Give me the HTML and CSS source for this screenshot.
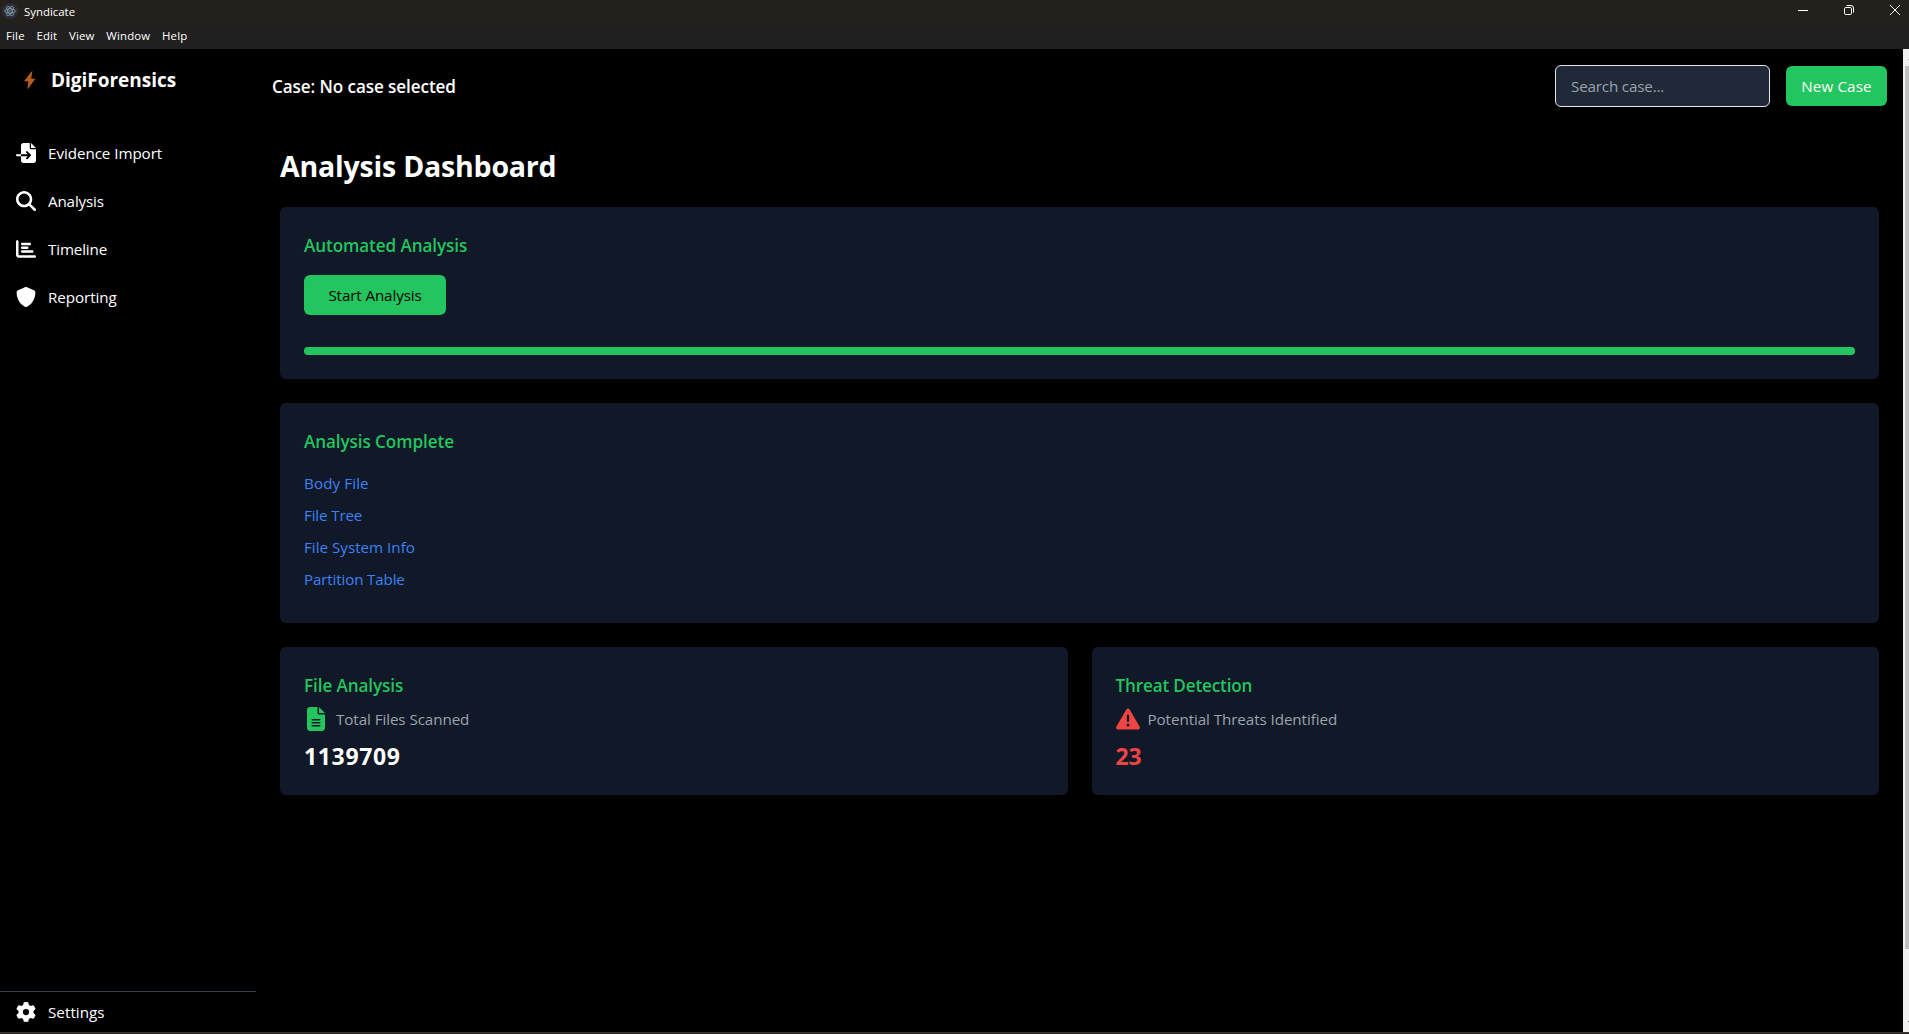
FILE: index.html
```html
<!DOCTYPE html>
<html lang="en">
<head>
<meta charset="utf-8">
<title>Syndicate</title>
<link rel="stylesheet" href="styles.css">
</head>
<body>
<div class="window">
  <header class="titlebar">
    <svg class="app-icon" viewBox="0 0 16 16"><circle cx="8" cy="8" r="8" fill="#2b2e3a"/><g fill="none" stroke="#8fb0b6" stroke-width=".7"><ellipse cx="8" cy="8" rx="5.3" ry="2.1"/><ellipse cx="8" cy="8" rx="5.3" ry="2.1" transform="rotate(60 8 8)"/><ellipse cx="8" cy="8" rx="5.3" ry="2.1" transform="rotate(120 8 8)"/></g><circle cx="8" cy="8" r=".7" fill="#8fb0b6"/></svg>
    <span class="app-name">Syndicate</span>
    <div class="controls">
      <svg viewBox="0 0 12 12"><path d="M1 6.5h10"/></svg>
      <svg viewBox="0 0 12 12"><rect x="1.5" y="3.5" width="7" height="7" rx="1.3"/><path d="M3.5 1.5H8A2.5 2.5 0 0 1 10.5 4v4.5"/></svg>
      <svg viewBox="0 0 12 12"><path d="M1 1l10 10M11 1L1 11"/></svg>
    </div>
  </header>
  <nav class="menubar"><span>File</span><span>Edit</span><span>View</span><span>Window</span><span>Help</span></nav>
  <div class="app">
    <aside class="sidebar">
      <div class="brand">
        <svg viewBox="0 0 12 20"><path d="M8.4.5 0 11.2h4.3L3.4 19.6 11.4 8.8H7.3z"/></svg>
        <span>DigiForensics</span>
      </div>
      <nav class="nav">
        <a class="nav-item"><svg viewBox="0 0 512 512"><path d="M128 64c0-35.3 28.7-64 64-64H352V128c0 17.7 14.3 32 32 32H512V448c0 35.3-28.7 64-64 64H192c-35.3 0-64-28.7-64-64V336H302.1l-39 39c-9.4 9.4-9.4 24.6 0 33.9s24.6 9.4 33.9 0l80-80c9.4-9.4 9.4-24.6 0-33.9l-80-80c-9.4-9.4-24.6-9.4-33.9 0s-9.4 24.6 0 33.9l39 39H128V64zm0 224v48H24c-13.3 0-24-10.7-24-24s10.7-24 24-24H128zM512 128H384V0L512 128z"/></svg><span>Evidence Import</span></a>
        <a class="nav-item tight"><svg viewBox="0 0 512 512"><path d="M416 208c0 45.9-14.9 88.3-40 122.7L502.6 457.4c12.5 12.5 12.5 32.8 0 45.3s-32.8 12.5-45.3 0L330.7 376c-34.4 25.2-76.8 40-122.7 40C93.1 416 0 322.9 0 208S93.1 0 208 0S416 93.1 416 208zM208 352a144 144 0 1 0 0-288 144 144 0 1 0 0 288z"/></svg><span>Analysis</span></a>
        <a class="nav-item tight"><svg viewBox="0 0 512 512"><path d="M32 32c17.7 0 32 14.3 32 32V400c0 8.8 7.2 16 16 16H480c17.7 0 32 14.3 32 32s-14.3 32-32 32H80c-44.2 0-80-35.8-80-80V64C0 46.3 14.3 32 32 32zm96 96c0-17.7 14.3-32 32-32l192 0c17.7 0 32 14.3 32 32s-14.3 32-32 32l-192 0c-17.7 0-32-14.3-32-32zm32 64H288c17.7 0 32 14.3 32 32s-14.3 32-32 32H160c-17.7 0-32-14.3-32-32s14.3-32 32-32zm0 96H416c17.7 0 32 14.3 32 32s-14.3 32-32 32H160c-17.7 0-32-14.3-32-32s14.3-32 32-32z"/></svg><span>Timeline</span></a>
        <a class="nav-item"><svg viewBox="0 0 512 512"><path d="M256 0c4.6 0 9.2 1 13.4 2.9L457.7 82.8c22 9.3 38.4 31 38.3 57.2c-.5 99.2-41.3 280.7-213.6 363.2c-16.7 8-36.1 8-52.8 0C57.3 420.7 16.5 239.2 16 140c-.1-26.2 16.3-47.9 38.3-57.2L242.7 2.9C246.8 1 251.4 0 256 0z"/></svg><span>Reporting</span></a>
      </nav>
      <a class="nav-item settings"><svg viewBox="0 0 512 512"><path d="M495.9 166.6c3.2 8.7 .5 18.4-6.4 24.6l-43.3 39.4c1.1 8.3 1.7 16.8 1.7 25.4s-.6 17.1-1.7 25.4l43.3 39.4c6.9 6.2 9.6 15.9 6.4 24.6c-4.4 11.9-9.7 23.3-15.8 34.3l-4.7 8.1c-6.6 11-14 21.4-22.1 31.2c-5.9 7.2-15.7 9.6-24.5 6.8l-55.7-17.7c-13.4 10.3-28.2 18.9-44 25.4l-12.5 57.1c-2 9.1-9 16.3-18.2 17.8c-13.8 2.3-28 3.5-42.5 3.5s-28.7-1.2-42.5-3.5c-9.2-1.5-16.2-8.7-18.2-17.8l-12.5-57.1c-15.8-6.5-30.6-15.1-44-25.4L83.1 425.9c-8.8 2.8-18.6 .3-24.5-6.8c-8.1-9.8-15.5-20.2-22.1-31.2l-4.7-8.1c-6.1-11-11.4-22.4-15.8-34.3c-3.2-8.7-.5-18.4 6.4-24.6l43.3-39.4C64.6 273.1 64 264.6 64 256s.6-17.1 1.7-25.4L22.4 191.2c-6.9-6.2-9.6-15.9-6.4-24.6c4.4-11.9 9.7-23.3 15.8-34.3l4.7-8.1c6.6-11 14-21.4 22.1-31.2c5.9-7.2 15.7-9.6 24.5-6.8l55.7 17.7c13.4-10.3 28.2-18.9 44-25.4l12.5-57.1c2-9.1 9-16.3 18.2-17.8C227.3 1.2 241.5 0 256 0s28.7 1.2 42.5 3.5c9.2 1.5 16.2 8.7 18.2 17.8l12.5 57.1c15.8 6.5 30.6 15.1 44 25.4l55.7-17.7c8.8-2.8 18.6-.3 24.5 6.8c8.1 9.8 15.5 20.2 22.1 31.2l4.7 8.1c6.1 11 11.4 22.4 15.8 34.3zM256 336a80 80 0 1 0 0-160 80 80 0 1 0 0 160z"/></svg><span>Settings</span></a>
    </aside>
    <main class="main">
      <div class="topbar">
        <div class="case">Case: No case selected</div>
        <input class="search" type="text" placeholder="Search case...">
        <button class="btn btn-new">New Case</button>
      </div>
      <div class="content">
        <h1>Analysis Dashboard</h1>
        <section class="card">
          <h2>Automated Analysis</h2>
          <button class="btn btn-start">Start Analysis</button>
          <div class="progress"><div class="bar" style="width:100%"></div></div>
        </section>
        <section class="card">
          <h2>Analysis Complete</h2>
          <ul class="links">
            <li><a class="wide">Body File</a></li>
            <li><a class="tight">File Tree</a></li>
            <li><a class="even">File System Info</a></li>
            <li><a class="tight">Partition Table</a></li>
          </ul>
        </section>
        <div class="stats">
          <section class="card stat">
            <h2>File Analysis</h2>
            <div class="label"><svg viewBox="0 0 384 512" fill="#22c55e"><path d="M64 0C28.7 0 0 28.7 0 64V448c0 35.3 28.7 64 64 64H320c35.3 0 64-28.7 64-64V160H256c-17.7 0-32-14.3-32-32V0H64zM256 0V128H384L256 0zM112 256H272c8.8 0 16 7.2 16 16s-7.2 16-16 16H112c-8.8 0-16-7.2-16-16s7.2-16 16-16zm0 64H272c8.8 0 16 7.2 16 16s-7.2 16-16 16H112c-8.8 0-16-7.2-16-16s7.2-16 16-16zm0 64H272c8.8 0 16 7.2 16 16s-7.2 16-16 16H112c-8.8 0-16-7.2-16-16s7.2-16 16-16z"/></svg><span>Total Files Scanned</span></div>
            <div class="value files">1139709</div>
          </section>
          <section class="card stat">
            <h2 class="threat-title">Threat Detection</h2>
            <div class="label"><svg viewBox="0 0 512 512" fill="#ef4444"><path d="M256 32c14.2 0 27.3 7.5 34.5 19.8l216 368c7.3 12.4 7.3 27.7 .2 40.1S486.3 480 472 480H40c-14.3 0-27.6-7.7-34.7-20.1s-7-27.8 .2-40.1l216-368C228.7 39.5 241.8 32 256 32zm0 128c-13.3 0-24 10.7-24 24V296c0 13.3 10.7 24 24 24s24-10.7 24-24V184c0-13.3-10.7-24-24-24zm32 224a32 32 0 1 0 -64 0 32 32 0 1 0 64 0z"/></svg><span>Potential Threats Identified</span></div>
            <div class="value threats">23</div>
          </section>
        </div>
      </div>
    </main>
    <div class="scrollbar"><i class="arrow"></i><div class="thumb"></div><i class="arrow down"></i></div>
  </div>
  <div class="window-edge"></div>
</div>
</body>
</html>
```
FILE: styles.css
```css
* { box-sizing: border-box; margin: 0; padding: 0; }

body {
  background: #000;
  color: #fff;
  font-family: "Open Sans", "Noto Sans", sans-serif;
  font-size: 15.2px;
  line-height: 24px;
  letter-spacing: -0.06px;
  overflow: hidden;
}

svg { display: block; flex: none; }

.window { display: flex; flex-direction: column; height: 1034px; }

.titlebar {
  display: flex;
  align-items: center;
  height: 23px;
  padding: 0 8px 3px 2px;
  background: linear-gradient(90deg, #24211c, #22211c);
  font-size: 11.4px;
  letter-spacing: 0;
}
.app-icon { width: 16px; height: 16px; margin: 2px 6px 0 0; }
.app-name { line-height: 16px; padding-top: 3px; }
.controls { display: flex; gap: 34px; margin-left: auto; }
.controls svg { width: 12px; height: 12px; fill: none; stroke: #fff; stroke-width: 1; }

.menubar {
  display: flex;
  gap: 11.7px;
  height: 26px;
  padding-left: 6px;
  background: #202020;
  font-size: 11.4px;
  line-height: 26px;
  letter-spacing: 0.17px;
}

.app { display: flex; flex: 1; min-height: 0; }

.sidebar { display: flex; flex-direction: column; width: 256px; }
.brand {
  display: flex;
  align-items: center;
  gap: 15px;
  height: 28px;
  margin: 17px 0 35px 24px;
  font-size: 19px;
  font-weight: 700;
  line-height: 28px;
  letter-spacing: -0.02px;
}
.brand svg { width: 12px; height: 20px; fill: #b85c1e; }
.nav { flex: 1; }
.nav-item {
  display: flex;
  align-items: center;
  gap: 12px;
  height: 48px;
  padding: 0 16px;
}
.nav-item svg { width: 20px; height: 20px; fill: #fff; }
.tight { letter-spacing: -0.16px; }
.wide { letter-spacing: 0.1px; }
.even { letter-spacing: 0; }
.settings { height: 41px; border-top: 1px solid #374151; letter-spacing: 0.04px; }

.main { flex: 1; }
.topbar { display: flex; align-items: center; gap: 16px; padding: 16px; }
.case {
  margin-right: auto;
  padding-top: 2px;
  font-size: 17.1px;
  font-weight: 600;
  line-height: 28px;
  letter-spacing: -0.09px;
}
.search {
  width: 215px;
  height: 42px;
  padding: 0 15px;
  border: 1px solid #e5e7eb;
  border-radius: 6px;
  background: #1f2937;
  color: #fff;
  font: inherit;
  letter-spacing: -0.17px;
}
.search::placeholder { color: #9ca3af; opacity: 1; }
.btn {
  display: block;
  height: 40px;
  border: 0;
  border-radius: 6px;
  background: #22c55e;
  font: inherit;
}
.btn-new { width: 101px; color: #fff; letter-spacing: 0.12px; }
.btn-start { width: 142px; margin-top: 16px; color: #000; letter-spacing: -0.12px; }

.content { display: flex; flex-direction: column; gap: 24px; padding: 24px; }
h1 { padding-top: 2px; font-size: 28.5px; font-weight: 700; line-height: 34px; letter-spacing: -0.2px; }
h2 { padding-top: 2px; color: #22c55e; font-size: 17.1px; font-weight: 600; line-height: 26px; letter-spacing: -0.08px; }
.threat-title { letter-spacing: -0.15px; }
.card { padding: 24px; border-radius: 6px; background: #111827; }
.progress { height: 8px; margin-top: 32px; border-radius: 4px; background: #374151; }
.bar { height: 100%; border-radius: 4px; background: #22c55e; }

.links { display: flex; flex-direction: column; gap: 8px; padding: 16px 0 8px; list-style: none; color: #3b82f6; }

.stats { display: grid; grid-template-columns: 1fr 1fr; gap: 24px; }
.label { display: flex; gap: 8px; margin: 8px 0; color: #9ca3af; letter-spacing: -0.08px; }
.label svg { width: 24px; height: 24px; }
.value { padding-top: 2px; font-size: 23px; font-weight: 700; line-height: 30px; }
.files { letter-spacing: 0.66px; }
.threats { color: #ef4444; }

.scrollbar {
  display: flex;
  flex-direction: column;
  align-items: flex-end;
  justify-content: space-between;
  width: 6px;
  padding: 10px 0;
  background: #f1f1f1;
}
.thumb { width: 4px; height: 883px; margin: 6px 0 auto; background: #c1c1c1; }
.arrow { width: 1px; height: 1px; background: #a3a3a3; }
.arrow.down { background: #505050; }

.window-edge { height: 2px; border-top: 1px solid #3c3632; background: #24211e; }
```
